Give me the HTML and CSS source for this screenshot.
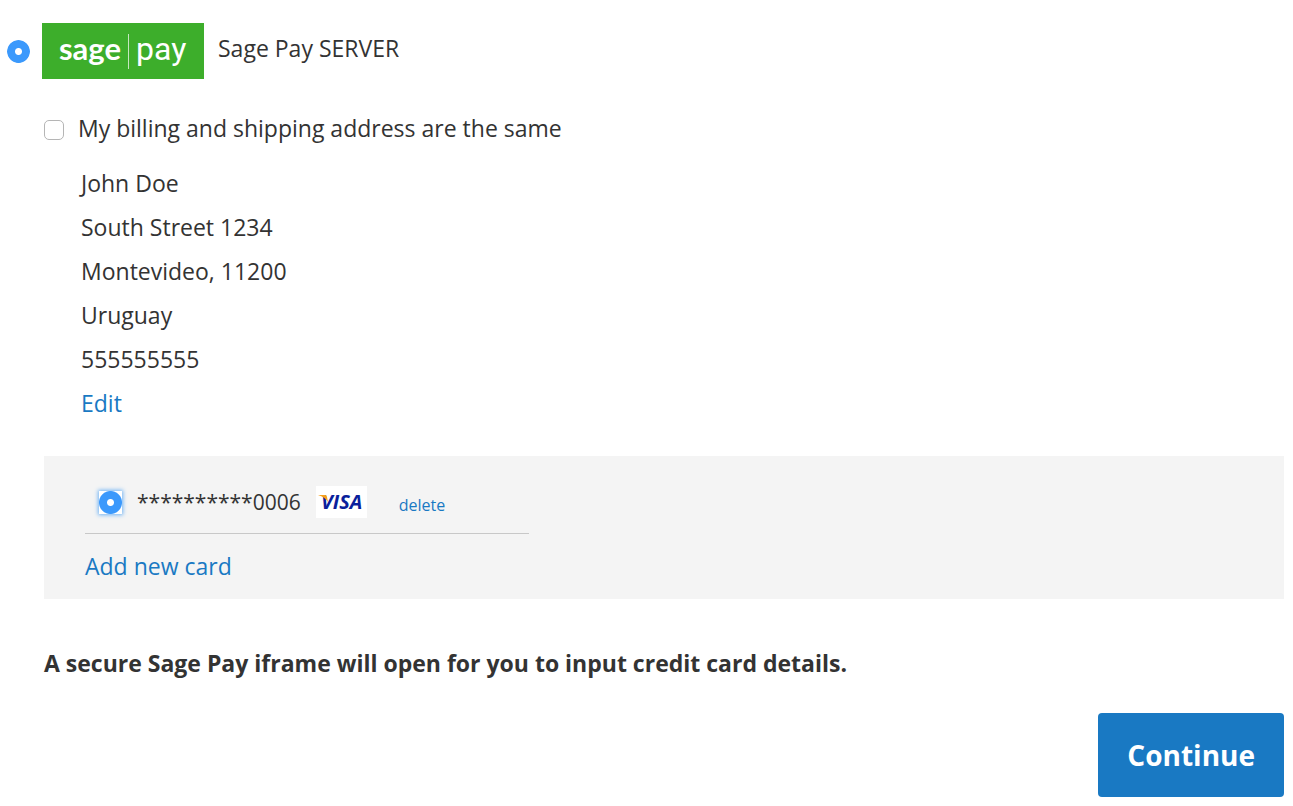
FILE: index.html
```html
<!DOCTYPE html>
<html lang="en">
<head>
  <meta charset="UTF-8">
  <meta name="viewport" content="width=device-width, initial-scale=1.0">
  <title>Checkout - Payment</title>
  <link rel="stylesheet" href="styles.css">
</head>
<body>
  <form class="payment">
    <div class="method">
      <input type="radio" class="radio" id="sagepay" name="method" checked>
      <label for="sagepay" class="method-label">
        <svg class="logo" viewBox="0 0 162 56" aria-hidden="true">
          <rect width="162" height="56" fill="#3dae2b"/>
          <text class="logo-sage" x="17" y="37">sage</text>
          <rect x="86" y="11" width="1" height="35" fill="#c5e7bf"/>
          <text class="logo-pay" x="94" y="37">pay</text>
        </svg>
        <span>Sage Pay SERVER</span>
      </label>
    </div>

    <div class="method-content">
      <div class="same-address">
        <input type="checkbox" class="checkbox" id="same-address">
        <label for="same-address">My billing and shipping address are the same</label>
      </div>

      <address class="address">
        John Doe<br>
        South Street 1234<br>
        Montevideo, 11200<br>
        Uruguay<br>
        555555555<br>
        <a href="#">Edit</a>
      </address>

      <div class="cards">
        <div class="card">
          <input type="radio" class="radio focused" id="card-0006" name="card" checked>
          <label for="card-0006">**********0006</label>
          <svg class="visa" viewBox="0 0 51 32" aria-hidden="true">
            <rect width="51" height="32" fill="#fff"/>
            <text class="visa-text" x="5" y="23">VISA</text>
            <path d="M2 9h7q2 0 2 2l1 5q-3-5-10-7z" fill="#f7a11b"/>
          </svg>
          <a href="#" class="delete">delete</a>
        </div>
        <a href="#" class="add-card">Add new card</a>
      </div>

      <p class="note">A secure Sage Pay iframe will open for you to input credit card details.</p>

      <div class="actions">
        <button type="submit" class="continue">Continue</button>
      </div>
    </div>
  </form>
</body>
</html>
```

FILE: styles.css
```css
* {
  box-sizing: border-box;
}

body {
  margin: 0;
  background: #fff;
  color: #333;
  font-family: "Open Sans", sans-serif;
  font-size: 23px;
  line-height: 44px;
}

a {
  color: #1979c3;
  text-decoration: none;
}

a:hover {
  text-decoration: underline;
}

.payment {
  padding: 23px 9px 9px 7px;
}

.method {
  display: flex;
  align-items: center;
  gap: 12px;
}

.method-label {
  display: flex;
  gap: 14px;
  line-height: 50px;
}

.logo {
  display: block;
  width: 162px;
  height: 56px;
}

.logo-sage,
.logo-pay {
  fill: #fff;
  font-family: Roboto, sans-serif;
  font-size: 32px;
}

.logo-sage {
  font-family: Lato, sans-serif;
  font-size: 31px;
  font-weight: bold;
}

.radio {
  appearance: none;
  flex: none;
  width: 23px;
  height: 23px;
  margin: 0;
  border-radius: 50%;
  border: 1px solid #3b99fc;
  background: #fff;
}

.radio:checked {
  border: none;
  background: radial-gradient(circle, #fff 3px, #3b99fc 4px, #3b99fc 11px, #fff 12px);
}

.focused {
  border-radius: 0;
  outline: none;
  box-shadow: 0 0 4px 1px #6fb3f5;
}

.method-content {
  padding-left: 37px;
}

.same-address {
  display: flex;
  align-items: center;
  gap: 14px;
  margin-top: 27px;
}

.checkbox {
  appearance: none;
  width: 20px;
  height: 20px;
  margin: 3px 0 0;
  border: 1px solid #b5b5b5;
  border-radius: 5px;
  background: #fff;
}

.checkbox:checked {
  background: #3b99fc;
}

.address {
  margin: 11px 0 31px 37px;
  font-style: normal;
}

.cards {
  padding: 24px 41px 11px;
  background: #f4f4f4;
}

.card {
  display: flex;
  align-items: center;
  width: 444px;
  padding: 0 0 9px 14px;
  border-bottom: 1px solid #c8c8c8;
}

.card label {
  margin: 0 15px;
  font-size: 21px;
}

.visa {
  width: 51px;
  height: 32px;
}

.visa-text {
  fill: #0a1f9c;
  font-family: "Open Sans", sans-serif;
  font-size: 20px;
  font-style: italic;
  font-weight: bold;
}

.delete {
  margin: 6px 0 0 32px;
  font-size: 16px;
  line-height: 24px;
}

.add-card {
  display: block;
  margin-top: 10px;
}

.note {
  margin: 42px 0 28px;
  font-weight: bold;
}

.actions {
  display: flex;
  justify-content: flex-end;
}

.continue {
  padding: 20px 29px;
  border: none;
  border-radius: 4px;
  background: #1979c3;
  color: #fff;
  font-family: inherit;
  font-size: 28px;
  font-weight: bold;
  line-height: 44px;
  cursor: pointer;
}

.continue:hover {
  background: #006bb4;
}
```
